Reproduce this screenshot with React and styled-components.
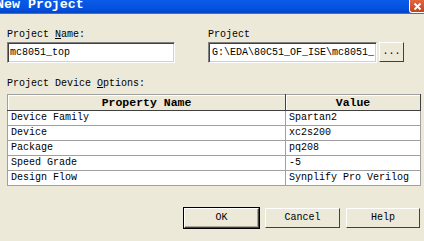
import React from 'react';
import styled, { createGlobalStyle } from 'styled-components';

const GlobalStyle = createGlobalStyle`
  html, body { margin: 0; padding: 0; background: #ece9d8; }
  body { font-family: 'Liberation Mono', 'DejaVu Sans Mono', monospace; }
`

const Window = styled.div`
  width: 424px;
  height: 241px;
  overflow: hidden;
  background: #ece9d8;
  display: flex;
  flex-direction: column;
  color: #000;
`

const TitleBar = styled.div`
  height: 13px;
  flex: none;
  display: flex;
  align-items: flex-end;
  justify-content: space-between;
  background: linear-gradient(to bottom, #0a5ce8 0%, #0452e0 60%, #0346c8 100%);
  border-bottom: 1px solid #3a6fd8;
  overflow: hidden;
`

const Title = styled.span`
  margin-left: -4px;
  font-size: 13.3px;
  font-weight: bold;
  line-height: 13px;
  margin-bottom: 2px;
  color: #fff;
  white-space: nowrap;
`

const CloseButton = styled.div`
  width: 15px;
  height: 12px;
  align-self: flex-start;
  margin-right: -1px;
  background: linear-gradient(to bottom, #e2663f, #c9421e);
  border-left: 1px solid #fff;
  border-bottom: 1px solid #fff;
  border-bottom-left-radius: 3px;
  display: flex;
  align-items: center;
  justify-content: center;
`

const Content = styled.div`
  padding: 15px 3px 0 7px;
  display: flex;
  flex-direction: column;
`

const TopRow = styled.div`
  display: flex;
  align-items: flex-end;
`

const Field = styled.div`
  display: flex;
  flex-direction: column;
  width: ${p => p.$width}px;
  margin-left: ${p => p.$offset || 0}px;
`

const Label = styled.div`
  font-size: 10px;
  line-height: 12px;
  height: 12px;
  margin-bottom: 1px;
  white-space: nowrap;
  u { text-decoration: underline; }
`

const InputRow = styled.div`
  display: flex;
  gap: 2px;
`

const TextBox = styled.div`
  flex: 1;
  height: 21px;
  box-sizing: border-box;
  background: #fff;
  border-top: 1px solid #808080;
  border-left: 1px solid #808080;
  border-right: 1px solid #ffffff;
  border-bottom: 1px solid #ffffff;
  box-shadow: inset 1px 1px 0 #404040, inset -1px -1px 0 #d4d0c8;
  font-size: 10px;
  line-height: 19px;
  padding-left: ${p => p.$pad}px;
  white-space: nowrap;
  overflow: hidden;
`

const Button = styled.div`
  box-sizing: border-box;
  width: ${p => p.$width}px;
  height: ${p => p.$height || 20}px;
  background: #ece9d8;
  border-top: 1px solid #fff;
  border-left: 1px solid #fff;
  border-right: 1px solid #404040;
  border-bottom: 1px solid #404040;
  box-shadow: inset -1px -1px 0 #aca899, ${p => p.$default ? '0 0 0 1px #000' : 'none'};
  display: flex;
  align-items: center;
  justify-content: center;
  font-size: 10px;
  line-height: 12px;
  flex: none;
`

const SectionLabel = styled(Label)`
  margin-top: 15px;
  margin-bottom: 4px;
`

const Grid = styled.table`
  width: 414px;
  border-collapse: collapse;
  background: #fff;
  border: 1px solid #a0a0a0;
  table-layout: fixed;
  font-size: 10px;
`

const HeadCell = styled.th`
  height: 15px;
  padding: 0;
  background: #ece9d8;
  border-right: 1px solid #404040;
  border-bottom: 1px solid #404040;
  box-shadow: inset 1px 1px 0 #fff;
  font-size: 11.5px;
  font-weight: bold;
  line-height: 13px;
  text-align: center;
  width: ${p => p.$width ? p.$width + 'px' : 'auto'};
`

const Cell = styled.td`
  height: 14px;
  padding: 0 0 0 3px;
  border-right: 1px solid #a0a0a0;
  border-bottom: 1px solid #a0a0a0;
  line-height: 14px;
  white-space: nowrap;
`

const ButtonRow = styled.div`
  display: flex;
  justify-content: flex-end;
  gap: 6px;
  margin-top: 22px;
  padding-right: 1px;
`

const rows = [
  ['Device Family', 'Spartan2'],
  ['Device', 'xc2s200'],
  ['Package', 'pq208'],
  ['Speed Grade', '-5'],
  ['Design Flow', 'Synplify Pro Verilog'],
];

export default function App() {
  return (
    <>
      <GlobalStyle />
      <Window>
        <TitleBar>
          <Title>New Project</Title>
          <CloseButton>
            <svg width="9" height="9" viewBox="0 0 9 9">
              <path d="M1.5 1.5 L7.5 7.5 M7.5 1.5 L1.5 7.5" stroke="#fff" strokeWidth="1.8" />
            </svg>
          </CloseButton>
        </TitleBar>
        <Content>
          <TopRow>
            <Field $width={168}>
              <Label>Project <u>N</u>ame:</Label>
              <TextBox $pad={2}>mc8051_top</TextBox>
            </Field>
            <Field $width={196} $offset={33}>
              <Label>Project</Label>
              <InputRow>
                <TextBox $pad={3}>G:\EDA\80C51_OF_ISE\mc8051_</TextBox>
                <Button $width={25} $height={20}>...</Button>
              </InputRow>
            </Field>
          </TopRow>
          <SectionLabel>Project Device <u>O</u>ptions:</SectionLabel>
          <Grid>
            <thead>
              <tr>
                <HeadCell $width={277}>Property Name</HeadCell>
                <HeadCell>Value</HeadCell>
              </tr>
            </thead>
            <tbody>
              {rows.map(([k, v]) => (
                <tr key={k}>
                  <Cell>{k}</Cell>
                  <Cell>{v}</Cell>
                </tr>
              ))}
            </tbody>
          </Grid>
          <ButtonRow>
            <Button $width={75} $height={20} $default>OK</Button>
            <Button $width={75} $height={20}>Cancel</Button>
            <Button $width={74} $height={20}>Help</Button>
          </ButtonRow>
        </Content>
      </Window>
    </>
  );
}
